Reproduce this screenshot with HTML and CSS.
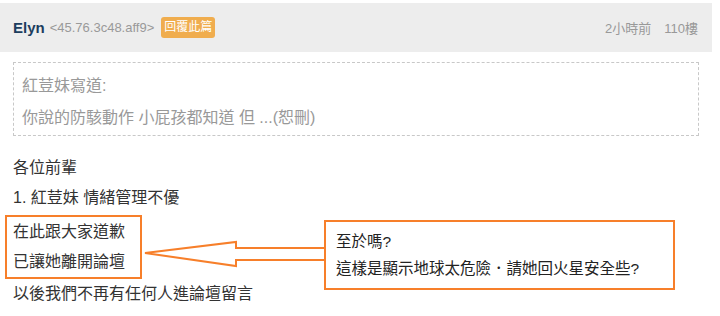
FILE: index.html
```html
<!DOCTYPE html>
<html lang="zh-Hant">

<head>
    <meta charset="UTF-8" />
    <meta name="viewport" content="width=device-width, initial-scale=1.0" />
    <title>110樓 - Elyn</title>
    <link rel="stylesheet" href="styles.css">
</head>

<body>
    <div class="post">
        <div class="post-head">
            <div class="author">
                <span class="name">Elyn</span>
                <span class="ip">&lt;45.76.3c48.aff9&gt;</span>
                <span class="reply">回覆此篇</span>
            </div>
            <div class="meta">
                <span>2小時前</span>
                <span>110樓</span>
            </div>
        </div>

        <div class="quote">
            <p>紅荳妹寫道:</p>
            <p>你說的防駭動作 小屁孩都知道 但 ...(恕刪)</p>
        </div>

        <div class="content">
            <p>各位前輩</p>
            <p>1. 紅荳妹 情緒管理不優</p>
            <div class="mark">
                <p>在此跟大家道歉</p>
                <p>已讓她離開論壇</p>
            </div>
            <p>以後我們不再有任何人進論壇留言</p>
        </div>

        <svg class="arrow" width="186" height="30" viewBox="0 0 186 30">
            <polygon points="3,13 94,2 94,8 185,8 185,20 94,20 94,26" />
        </svg>

        <div class="note">
            <p>至於嗎?</p>
            <p>這樣是顯示地球太危險．請她回火星安全些?</p>
        </div>
    </div>
</body>

</html>
```

FILE: styles.css
```css
* {
    padding: 0;
    margin: 0;
    box-sizing: border-box;
}

body {
    font-family: "Liberation Sans", "Noto Sans CJK TC", sans-serif;
    color: #333;
    background: white;
}

.post {
    position: relative;
    width: 720px;
    height: 316px;
    overflow: hidden;
}

.post-head {
    margin-top: 3px;
    width: 712px;
    height: 49px;
    padding: 0 14px 0 13px;
    background-color: #ededed;
    display: flex;
    align-items: center;
    justify-content: space-between;
}

.author {
    display: flex;
    align-items: center;
    gap: 5px;
}

.name {
    font-size: 15px;
    font-weight: bold;
    color: #1c3d5e;
}

.ip {
    font-size: 13px;
    color: #999;
}

.reply {
    margin-left: 2px;
    padding: 0 3px;
    height: 21px;
    line-height: 21px;
    font-size: 12px;
    color: white;
    background-color: #f0ad4e;
    border-radius: 3px;
}

.meta {
    display: flex;
    gap: 13px;
    font-size: 13px;
    color: #999;
}

.quote {
    margin: 10px 0 0 13px;
    width: 686px;
    padding: 7px 8px 1px;
    border: 1px dashed #c8c8c8;
    font-size: 16px;
    line-height: 32px;
    color: #999;
}

.content {
    margin: 17px 0 0 13px;
    font-size: 16px;
    line-height: 30px;
    color: #333;
}

.mark {
    margin: 2px 0 0 -8px;
    width: 137px;
    padding-left: 6px;
    border: 2px solid #f77f2a;
}

.arrow {
    position: absolute;
    left: 142px;
    top: 240px;
}

.arrow polygon {
    fill: white;
    stroke: #f77f2a;
    stroke-width: 2;
}

.note {
    position: absolute;
    left: 324px;
    top: 220px;
    width: 351px;
    height: 70px;
    padding: 6px 10px;
    border: 2px solid #f77f2a;
    background: white;
    font-size: 15.5px;
    line-height: 27px;
    color: #222;
}
```
